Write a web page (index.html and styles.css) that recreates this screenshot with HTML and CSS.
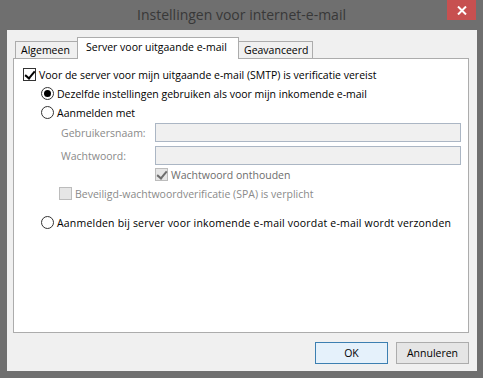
FILE: index.html
```html
<!DOCTYPE html>
<html>
<head>
    <meta charset="utf-8">
    <link rel="stylesheet" href="styles.css">
</head>
<body>
    <div class="window">
        <div class="titlebar">
            <div class="title">Instellingen voor internet-e-mail</div>
            <div class="close-btn">
                <svg width="10" height="9" viewBox="0 0 10 9">
                    <path d="M1 0.5 L9 8.5 M9 0.5 L1 8.5" stroke="#fff" stroke-width="2" fill="none"/>
                </svg>
            </div>
        </div>
        <div class="client">
            <div class="tabs">
                <div class="tab">Algemeen</div>
                <div class="tab active">Server voor uitgaande e-mail</div>
                <div class="tab">Geavanceerd</div>
            </div>
            <div class="panel">
                <div class="row row-first">
                    <span class="check checked"></span>
                    <span>Voor de server voor mijn uitgaande e-mail (SMTP) is verificatie vereist</span>
                </div>
                <div class="row indent">
                    <span class="radio selected"></span>
                    <span>Dezelfde instellingen gebruiken als voor mijn inkomende e-mail</span>
                </div>
                <div class="row indent">
                    <span class="radio"></span>
                    <span>Aanmelden met</span>
                </div>
                <div class="field">
                    <span class="field-label">Gebruikersnaam:</span>
                    <span class="input"></span>
                </div>
                <div class="field">
                    <span class="field-label">Wachtwoord:</span>
                    <span class="input"></span>
                </div>
                <div class="row remember disabled">
                    <span class="check checked dim"></span>
                    <span>Wachtwoord onthouden</span>
                </div>
                <div class="row spa disabled">
                    <span class="check dim"></span>
                    <span>Beveiligd-wachtwoordverificatie (SPA) is verplicht</span>
                </div>
                <div class="row indent row-last">
                    <span class="radio"></span>
                    <span>Aanmelden bij server voor inkomende e-mail voordat e-mail wordt verzonden</span>
                </div>
            </div>
            <div class="buttons">
                <div class="btn default">OK</div>
                <div class="btn">Annuleren</div>
            </div>
        </div>
    </div>
</body>
</html>
```

FILE: styles.css
```css
* {
    margin: 0;
    padding: 0;
    box-sizing: border-box;
}

body {
    width: 483px;
    height: 378px;
    background: #6f6f6f;
    font-family: 'Open Sans', 'Noto Sans', sans-serif;
    font-size: 10.5px;
    color: #000;
    overflow: hidden;
}

.window {
    display: flex;
    flex-direction: column;
    height: 100%;
}

.titlebar {
    height: 31px;
    position: relative;
    display: flex;
    justify-content: center;
    align-items: center;
}

.title {
    font-size: 14px;
    color: #383838;
    margin-top: -1px;
}

.close-btn {
    position: absolute;
    top: 0;
    right: 7px;
    width: 29px;
    height: 20px;
    background: #c75050;
    display: flex;
    justify-content: center;
    align-items: center;
}

.client {
    flex: 1;
    margin: 0 6px 7px 7px;
    background: #f0f0f0;
    padding: 7px 8px 7px 6px;
    display: flex;
    flex-direction: column;
}

.tabs {
    display: flex;
    align-items: flex-end;
    padding-left: 2px;
    height: 21px;
    position: relative;
    z-index: 1;
}

.tab {
    height: 17px;
    line-height: 16px;
    padding: 0 5px;
    border: 1px solid #acacac;
    border-bottom: none;
    background: #f0f0f0;
    color: #000;
    white-space: nowrap;
}

.tab:first-child {
    width: 62px;
    border-right: none;
}

.tab.active {
    height: 22px;
    width: 162px;
    line-height: 18px;
    margin-bottom: -1px;
    background: #fff;
    padding-left: 8px;
}

.tab:last-child {
    width: 74px;
    border-left: none;
}

.panel {
    background: #fff;
    border: 1px solid #acacac;
    height: 275px;
    padding: 5px 0 0 9px;
}

.row {
    display: flex;
    align-items: center;
    height: 19px;
    white-space: nowrap;
}

.row-first {
    margin-top: 1px;
}

.indent {
    padding-left: 18px;
}

.row-last {
    margin-top: 10px;
    letter-spacing: 0.2px;
}

.check {
    width: 13px;
    height: 13px;
    border: 1px solid #333;
    background: #fff;
    margin-right: 3px;
    position: relative;
    flex-shrink: 0;
}

.check.checked::after {
    content: '';
    position: absolute;
    left: 3px;
    top: 0px;
    width: 4px;
    height: 8px;
    border: solid #000;
    border-width: 0 2px 2px 0;
    transform: rotate(40deg);
}

.check.dim {
    border-color: #bcbcbc;
    background: #e6e6e6;
}

.check.dim.checked::after {
    border-color: #6d6d6d;
}

.radio {
    width: 13px;
    height: 13px;
    border: 1px solid #333;
    border-radius: 50%;
    background: #fff;
    margin-right: 3px;
    position: relative;
    flex-shrink: 0;
}

.radio.selected::after {
    content: '';
    position: absolute;
    left: 2px;
    top: 2px;
    width: 7px;
    height: 7px;
    border-radius: 50%;
    background: #000;
}

.field {
    display: flex;
    align-items: center;
    height: 19px;
    margin-top: 1px;
    padding-left: 38px;
    color: #8a8a8a;
}

.field + .field {
    margin-top: 4px;
}

.field-label {
    width: 94px;
    white-space: nowrap;
}

.input {
    width: 306px;
    height: 19px;
    border: 1px solid #abb6c4;
    background: #f0f0f0;
}

.disabled {
    color: #6d6d6d;
}

.remember {
    padding-left: 132px;
}

.spa {
    padding-left: 36px;
    color: #8a8a8a;
}

.buttons {
    display: flex;
    justify-content: flex-end;
    gap: 8px;
    margin-top: 9px;
}

.btn {
    width: 73px;
    height: 22px;
    border: 1px solid #acacac;
    background: #e5e5e5;
    display: flex;
    justify-content: center;
    align-items: center;
}

.btn.default {
    border-color: #3c7fb1;
    background: #e5f1fb;
}
```
